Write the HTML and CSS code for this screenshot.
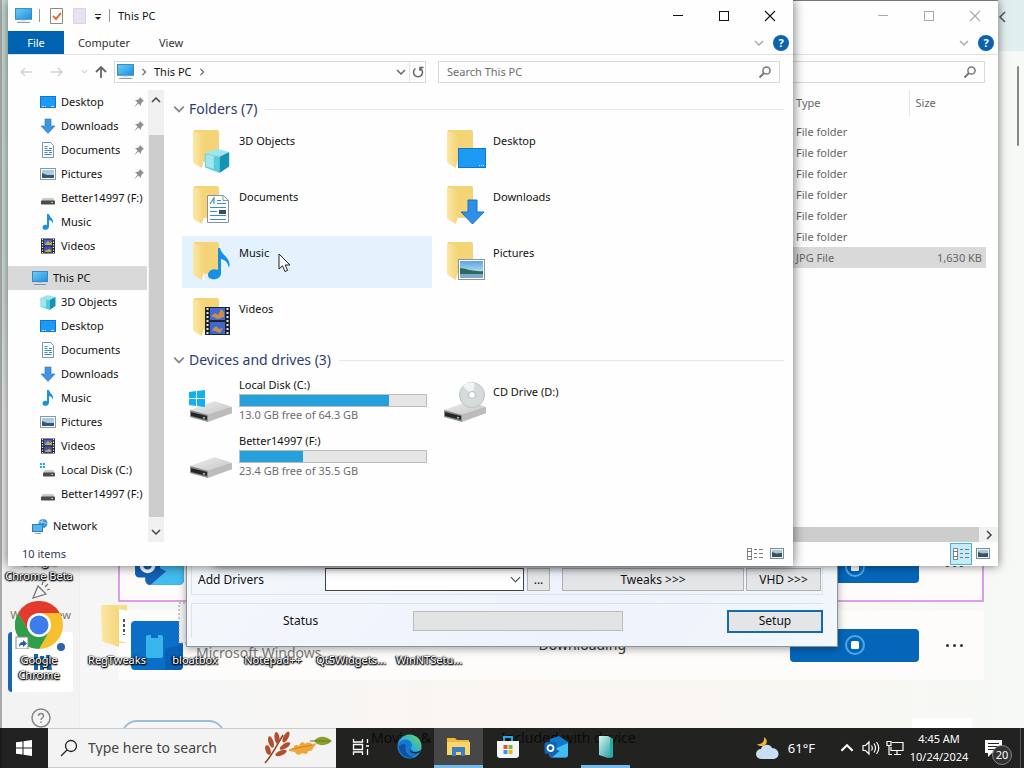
FILE: index.html
```html
<!DOCTYPE html>
<html lang="en">
<head>
  <meta charset="UTF-8">
  <title>This PC</title>
  <link rel="stylesheet" href="styles.css">
</head>

<body>

  <!-- Shared icons -->
  <svg class="sprite" aria-hidden="true">
    <defs>
      <linearGradient id="g-screen" x1="0" y1="0" x2="1" y2="1">
        <stop offset="0" stop-color="#6fd0f7"/><stop offset="1" stop-color="#1c8fe0"/>
      </linearGradient>
      <linearGradient id="g-folder" x1="0" y1="0" x2="1" y2="0">
        <stop offset="0" stop-color="#fbe7a6"/><stop offset="1" stop-color="#f5d57a"/>
      </linearGradient>
      <linearGradient id="g-sky" x1="0" y1="0" x2="0" y2="1">
        <stop offset="0" stop-color="#5aa5df"/><stop offset="1" stop-color="#e8f4fb"/>
      </linearGradient>
      <linearGradient id="g-drive" x1="0" y1="0" x2="1" y2="1">
        <stop offset="0" stop-color="#efefef"/><stop offset="1" stop-color="#c4c4c4"/>
      </linearGradient>
      <linearGradient id="g-edge" x1="0" y1="1" x2="1" y2="0">
        <stop offset="0" stop-color="#0c63c4"/><stop offset=".5" stop-color="#27a9e0"/><stop offset="1" stop-color="#6fe04f"/>
      </linearGradient>
      <linearGradient id="g-note" x1="0" y1="0" x2="1" y2="1">
        <stop offset="0" stop-color="#d7f6f3"/><stop offset="1" stop-color="#179a97"/>
      </linearGradient>
    </defs>

    <symbol id="i-pc" viewBox="0 0 16 16">
      <rect x="0.5" y="1.5" width="15" height="10" fill="url(#g-screen)" stroke="#3c88bd"/>
      <path d="M2 14.500h12" stroke="#7f97a8"/><path d="M6 12.500h4" stroke="#b9cad6"/>
    </symbol>
    <symbol id="i-desktop" viewBox="0 0 16 16">
      <rect x="0.5" y="2.500" width="15" height="11" fill="#1c9bf4" stroke="#1275cc"/>
      <path d="M2 12.500h2M5 12.500h1M11 12.500h3" stroke="#bfe4ff"/>
    </symbol>
    <symbol id="i-down" viewBox="0 0 16 16">
      <path d="M5 1h6v7h4l-7 7.500L1 8h4z" fill="#3f94e0" stroke="#2a74bd" stroke-width=".6"/>
    </symbol>
    <symbol id="i-doc" viewBox="0 0 16 16">
      <path d="M2.500.5h8l3 3v12h-11z" fill="#fdfefe" stroke="#7a97a8"/>
      <path d="M4.500 4.500h3M9 6.500h3M4.500 6.500h3M4.500 8.500h7M4.500 10.500h3M4.500 12.500h7M9 10.500h3" stroke="#3e84b4"/>
    </symbol>
    <symbol id="i-pic" viewBox="0 0 16 16">
      <rect x="0.5" y="2.500" width="15" height="11" fill="#fff" stroke="#8798a5"/>
      <rect x="2" y="4" width="12" height="8" fill="#a5cbe6"/>
      <path d="M2 7l5 2 7 0v3H2z" fill="#3c5668"/>
    </symbol>
    <symbol id="i-drive" viewBox="0 0 16 16">
      <path d="M3 8h10l2 3H1z" fill="#c9c9c9"/><rect x="1" y="10.500" width="14" height="4" rx="1" fill="#4b4b4b"/>
      <rect x="11" y="12" width="2" height="1" fill="#7ee27e"/>
    </symbol>
    <symbol id="i-sysdrive" viewBox="0 0 16 16">
      <path d="M0 1h2v2H0zM3 1h2v2H3zM0 4h2v2H0zM3 4h2v2H3z" fill="#19b0e6"/>
      <path d="M5 8h8l2 3H3z" fill="#c9c9c9"/><rect x="3" y="10.500" width="12" height="4" rx="1" fill="#4b4b4b"/>
      <rect x="11" y="12" width="2" height="1" fill="#7ee27e"/>
    </symbol>
    <symbol id="i-music" viewBox="0 0 16 16">
      <path d="M7 0h2c.5 3.500 5 4.500 4 10-.5-2-1.500-3.500-4-4v6.500C9 16.500 2.500 17 2.500 13.500c0-2.200 2.500-3.200 4.500-2.300z" fill="#1a93d9"/>
    </symbol>
    <symbol id="i-video" viewBox="0 0 16 16">
      <rect x="1" y="0.500" width="14" height="15" fill="#20232c"/>
      <path d="M2.500 1v14M13.500 1v14" stroke="#e8e8e8" stroke-width="1.300" stroke-dasharray="1.300 1.300"/>
      <rect x="4" y="1.500" width="8" height="6" fill="#4b62c2"/><rect x="4" y="8.500" width="8" height="6" fill="#3f55b0"/>
      <path d="M5 6l3-3 2 2 2-1v3H5zM5 13l4-2 2 1v2H5z" fill="#c8a94a"/>
    </symbol>
    <symbol id="i-cube" viewBox="0 0 16 16">
      <path d="M0.500 4L8 1l7.500 2L9.500 6z" fill="#9be6f0"/>
      <path d="M0.500 4l9 2v10l-9-3.500z" fill="#55cddd"/><path d="M15.500 3l-6 3v10l6-4z" fill="#1394b3"/>
      <path d="M1 4.500l5 1v8L1 12z" fill="#c2f1f6" opacity=".7"/>
    </symbol>
    <symbol id="i-network" viewBox="0 0 16 16">
      <circle cx="11" cy="5.500" r="4.500" fill="#3b97d6"/><path d="M7 4c3-1 5 0 8 2M11 1c-2 3-2 6 0 9" stroke="#a6dcf7" fill="none"/>
      <rect x="0.5" y="6.500" width="10" height="7" fill="#52b7f0" stroke="#2b7eb8"/><path d="M3 15.500h6" stroke="#8aa"/>
    </symbol>
    <symbol id="i-pin" viewBox="0 0 12 12">
      <path d="M7 1l4 4-1.500.5L8 8v2L5.500 7.500 1 11.500 4.500 6.500 2 4h2.500L6.500 2.500z" fill="#8f8f8f"/>
    </symbol>
    <symbol id="i-chevron" viewBox="0 0 10 10">
      <path d="M1 3l4 4 4-4" fill="none" stroke="currentColor" stroke-width="1.500"/>
    </symbol>
    <symbol id="i-lens" viewBox="0 0 14 14">
      <circle cx="8.500" cy="5.500" r="3.600" fill="none" stroke="currentColor" stroke-width="1.500"/>
      <path d="M6 8l-4.500 4.500" stroke="currentColor" stroke-width="2"/>
    </symbol>
    <symbol id="i-min" viewBox="0 0 12 12"><path d="M1 5.500h10" stroke="currentColor"/></symbol>
    <symbol id="i-max" viewBox="0 0 12 12"><rect x="1.500" y="1.500" width="9" height="9" fill="none" stroke="currentColor"/></symbol>
    <symbol id="i-close" viewBox="0 0 12 12"><path d="M1 1l10 10M11 1L1 11" stroke="currentColor" stroke-width="1.100"/></symbol>
    <symbol id="i-details" viewBox="0 0 18 14">
      <rect x="1.500" y="1.500" width="4" height="11" fill="#fff" stroke="#888"/>
      <path d="M1 4.500h5M1 9.500h5M8 2.500h3M13 2.500h4M8 6.500h3M13 6.500h4M8 10.500h3M13 10.500h4" stroke="#777"/>
    </symbol>
    <symbol id="i-large" viewBox="0 0 14 12">
      <rect x="0.5" y="0.5" width="13" height="10" fill="#eef4f8" stroke="#7d8b96"/>
      <path d="M2 2h10v7H2z" fill="#a9c6da"/><path d="M2 4l4 1.500L12 5v4H2z" fill="#3a5161"/>
    </symbol>
    <symbol id="i-folder" viewBox="0 0 48 48">
      <path d="M3 4h23c1 0 2 1 2 2v30H12L3 34z" fill="#f5d478"/>
      <path d="M9 35l4 0v7l-4-2z" fill="#fff"/>
      <path d="M2 5l9 3c1 .5 1.500 1 1.500 2v26c0 2-1 2-1.500 6l-7-4c-1-.5-2-1.500-2-3z" fill="url(#g-folder)"/>
    </symbol>
    <symbol id="i-bigdrive" viewBox="0 0 44 24">
      <path d="M1 12L26 3l17 6v5L20 22z" fill="#a9a9a9"/>
      <path d="M1 11L26 2l17 6-24 8z" fill="url(#g-drive)"/>
      <path d="M1 11l18 5v7L1 18z" fill="#8d8d8d"/><path d="M2 13l16 4v4L2 17z" fill="#262626"/>
      <path d="M14 18.500l2 .5" stroke="#7ee27e" stroke-width="1.500"/>
      <path d="M19 16l24-8v6l-24 9z" fill="#bcbcbc"/>
    </symbol>
    <symbol id="i-stop" viewBox="0 0 22 22">
      <circle cx="11" cy="11" r="9" fill="none" stroke="#4fa7ea" stroke-width="2"/>
      <rect x="7" y="7" width="8" height="8" rx="1.500" fill="#fff"/>
    </symbol>
    <symbol id="i-outlook" viewBox="0 0 50 44">
      <path d="M12 6L30 0l18 12v26c0 3-2 5-5 5H16c-3 0-5-2-5-5z" fill="#1277cf"/>
      <path d="M11 30l37-16v24c0 3-2 5-5 5H16c-3 0-5-2-5-5z" fill="#42bdf0"/>
      <path d="M11 20l20 10-15 13c-3 0-5-2-5-5z" fill="#1e5fb5"/>
      <rect x="1" y="12" width="24" height="24" rx="4" fill="#0f62b4"/>
      <circle cx="13" cy="24" r="6" fill="none" stroke="#fff" stroke-width="3.500"/>
    </symbol>
  </svg>

  <!-- Store app, fills the screen at the back -->
  <section class="store">
    <nav class="store-nav">
      <a href="#new" class="store-link">
        <svg width="20" height="18" viewBox="0 0 20 18"><path d="M2 17L7 5l8 8zM11 4l1-3M14 6l3-3M16 9l3-1" fill="none" stroke="#777" stroke-width="1.300"/></svg>
        <span>What's New</span>
      </a>
      <a href="#library" class="store-link current">
        <svg width="20" height="20" viewBox="0 0 20 20"><path d="M1 2h4v16H1zM7 4h4v14H7zM13 3h4l2 15h-5z" fill="#1767b0"/></svg>
        <i class="dot"></i>
      </a>
      <a href="#help" class="store-link help">
        <svg width="20" height="20" viewBox="0 0 20 20"><circle cx="10" cy="10" r="9" fill="none" stroke="#888" stroke-width="1.500"/><path d="M7.500 8c0-3.500 5-3.500 5 0 0 2-2.500 2-2.500 4M10 13.500v1.500" fill="none" stroke="#888" stroke-width="1.500"/></svg>
      </a>
    </nav>
    <div class="store-list">
      <article class="app-card picked">
        <svg class="app-icon" width="52" height="46"><use href="#i-outlook"/></svg>
        <button class="stop" aria-label="Stop"><svg width="22" height="22"><use href="#i-stop"/></svg></button>
        <button class="more" aria-label="More"><i></i><i></i><i></i></button>
      </article>
      <article class="app-card">
        <svg class="app-icon" width="52" height="49" viewBox="0 0 52 49"><rect width="52" height="49" rx="4" fill="#0b6fc8"/><rect x="15" y="14" width="17" height="23" rx="2" fill="#37b5ec"/><path d="M20 14h7v3h-7z" fill="#0b6fc8"/><path d="M34 28l18-5v21c0 3-1 5-4 5H34z" fill="#0860b4"/></svg>
        <span class="publisher">Microsoft Windows</span>
        <span class="state">Downloading</span>
        <button class="stop" aria-label="Stop"><svg width="22" height="22"><use href="#i-stop"/></svg></button>
        <button class="more" aria-label="More"><i></i><i></i><i></i></button>
      </article>
      <div class="app-row">
        <button class="pill" aria-label="Filter"></button>
        <span class="row-name">Movies &amp; TV</span>
        <span class="row-note">Included with device</span>
        <span class="row-box"></span>
      </div>
    </div>
    <svg class="store-arrow" width="8" height="12" viewBox="0 0 8 12"><path d="M7 1L2 6l5 5" fill="none" stroke="#555" stroke-width="1.500"/></svg>
    <span class="store-scroll"></span>
  </section>

  <!-- Desktop shortcuts -->
  <div class="shortcuts">
    <div class="shortcut">
      <span>Google<br>Chrome Beta</span>
      <div class="shortcut-pic">
        <svg width="48" height="48" viewBox="0 0 48 48">
          <circle cx="24" cy="24" r="24" fill="#f9c02d"/>
          <path d="M3.200 12A24 24 0 0 1 44.800 12H24z" fill="#e23b2e"/>
          <path d="M3.200 12A24 24 0 0 0 24 48L34.400 30 24 24 13.600 30z" fill="#2f9e4b"/>
          <path d="M3.200 12L13.600 30 24 12z" fill="#e23b2e"/>
          <circle cx="24" cy="24" r="12" fill="#fff"/><circle cx="24" cy="24" r="9.500" fill="#3b7ded"/>
          <rect x="1" y="36" width="12" height="12" fill="#fff" stroke="#888"/>
          <path d="M4 46c0-4 2-5 4-5v-2l4 3.500L8 46v-2c-2 0-3 0-4 2z" fill="#1f5fae"/>
        </svg>
      </div>
      <span>Google<br>Chrome</span>
    </div>
    <div class="shortcut">
      <div class="shortcut-pic">
        <svg width="48" height="48" viewBox="0 0 48 48"><path d="M8 4h26v38H12z" fill="#f7dc8a"/><path d="M26 8l9 2v32l-9-2z" fill="#fff"/><path d="M31 18v16" stroke="#456" stroke-width="2" stroke-dasharray="3 2"/><path d="M8 4h4l14 4v38L9 40z" fill="url(#g-folder)"/></svg>
      </div>
      <span>RegTweaks</span>
    </div>
    <div class="shortcut">
      <div class="shortcut-pic">
        <svg width="48" height="48" viewBox="0 0 48 48"><rect x="8" y="2" width="32" height="40" fill="#f4f4f4" stroke="#999" stroke-dasharray="2 2"/></svg>
      </div>
      <span>bloatbox</span>
    </div>
    <div class="shortcut"><span>Notepad++</span></div>
    <div class="shortcut"><span>Qt5Widgets...</span></div>
    <div class="shortcut"><span>WinNTSetu...</span></div>
  </div>

  <!-- WinNTSetup -->
  <section class="setup">
    <div class="setup-row drivers">
      <label for="drivers">Add Drivers</label>
      <select id="drivers"><option></option></select>
      <button class="btn browse">...</button>
      <button class="btn tweaks">Tweaks &gt;&gt;&gt;</button>
      <button class="btn vhd">VHD &gt;&gt;&gt;</button>
    </div>
    <div class="setup-row status">
      <span class="status-label">Status</span>
      <div class="setup-progress" role="progressbar" aria-label="Status"></div>
      <button class="btn run">Setup</button>
    </div>
  </section>

  <!-- Explorer, inactive window -->
  <section class="window back">
    <header class="titlebar">
      <div class="caption">
        <button aria-label="Minimize"><svg width="12" height="12"><use href="#i-min"/></svg></button>
        <button aria-label="Maximize"><svg width="12" height="12"><use href="#i-max"/></svg></button>
        <button aria-label="Close"><svg width="12" height="12"><use href="#i-close"/></svg></button>
      </div>
    </header>
    <div class="ribbon">
      <svg class="expand" width="10" height="10"><use href="#i-chevron"/></svg>
      <button class="help-btn" aria-label="Help">?</button>
    </div>
    <div class="address-row">
      <div class="search-box">
        <input type="search" aria-label="Search folder">
        <svg width="14" height="14"><use href="#i-lens"/></svg>
      </div>
    </div>
    <div class="details">
      <table>
        <thead><tr><th>Type</th><th>Size</th></tr></thead>
        <tbody>
          <tr><td>File folder</td><td></td></tr>
          <tr><td>File folder</td><td></td></tr>
          <tr><td>File folder</td><td></td></tr>
          <tr><td>File folder</td><td></td></tr>
          <tr><td>File folder</td><td></td></tr>
          <tr><td>File folder</td><td></td></tr>
          <tr class="selected"><td>JPG File</td><td>1,630 KB</td></tr>
        </tbody>
      </table>
    </div>
    <div class="hscroll"><span class="hthumb"></span><svg class="right" width="10" height="10"><use href="#i-chevron"/></svg></div>
    <footer class="statusbar">
      <button class="view on" aria-label="Details"><svg width="18" height="14"><use href="#i-details"/></svg></button>
      <button class="view" aria-label="Large icons"><svg width="14" height="12"><use href="#i-large"/></svg></button>
    </footer>
  </section>

  <!-- Explorer, This PC -->
  <main class="window front">
    <header class="titlebar">
      <svg class="tb-pc" width="17" height="17"><use href="#i-pc"/></svg>
      <span class="tb-sep"></span>
      <svg class="tb-check" width="13" height="16" viewBox="0 0 13 16"><path d="M.5.500h12v15H.5z" fill="#fff" stroke="#8a8a8a"/><path d="M3 8l3 3 5-6" fill="none" stroke="#e0703a" stroke-width="2"/></svg>
      <svg class="tb-new" width="13" height="16" viewBox="0 0 13 16"><path d="M.5.500h12v15H.5z" fill="#e9e2ee" stroke="#ddd5e2"/></svg>
      <svg class="tb-drop" width="8" height="8" viewBox="0 0 8 8"><path d="M1 1.500h6" stroke="#222"/><path d="M1 4h6L4 7z" fill="#222"/></svg>
      <span class="tb-sep"></span>
      <h1>This PC</h1>
      <div class="caption">
        <button aria-label="Minimize"><svg width="12" height="12"><use href="#i-min"/></svg></button>
        <button aria-label="Maximize"><svg width="12" height="12"><use href="#i-max"/></svg></button>
        <button aria-label="Close"><svg width="12" height="12"><use href="#i-close"/></svg></button>
      </div>
    </header>

    <div class="ribbon">
      <button class="tab file">File</button>
      <button class="tab">Computer</button>
      <button class="tab view-tab">View</button>
      <svg class="expand" width="10" height="10"><use href="#i-chevron"/></svg>
      <button class="help-btn" aria-label="Help">?</button>
    </div>

    <div class="address-row">
      <div class="nav-arrows">
        <button aria-label="Back" disabled><svg width="14" height="12" viewBox="0 0 14 12"><path d="M13 6H2M6 2L2 6l4 4" fill="none" stroke="currentColor" stroke-width="1.300"/></svg></button>
        <button aria-label="Forward" disabled><svg width="14" height="12" viewBox="0 0 14 12"><path d="M1 6h11M8 2l4 4-4 4" fill="none" stroke="currentColor" stroke-width="1.300"/></svg></button>
        <button class="recent" aria-label="Recent locations" disabled><svg width="7" height="7"><use href="#i-chevron"/></svg></button>
        <button class="up" aria-label="Up"><svg width="12" height="14" viewBox="0 0 12 14"><path d="M6 13V2M1 7l5-5 5 5" fill="none" stroke="currentColor" stroke-width="1.800"/></svg></button>
      </div>
      <div class="address">
        <svg width="17" height="17"><use href="#i-pc"/></svg>
        <svg class="right" width="8" height="8"><use href="#i-chevron"/></svg>
        <a href="#pc">This PC</a>
        <svg class="right" width="8" height="8"><use href="#i-chevron"/></svg>
        <button class="history" aria-label="Previous locations"><svg width="10" height="10"><use href="#i-chevron"/></svg></button>
        <button class="refresh" aria-label="Refresh"><svg width="12" height="12" viewBox="0 0 12 12"><path d="M3.500 2.500a4.500 4.500 0 1 0 5 0M8 5V1.500h3.500" fill="none" stroke="currentColor" stroke-width="1.500"/></svg></button>
      </div>
      <div class="search-box">
        <input type="search" placeholder="Search This PC" aria-label="Search This PC">
        <svg width="14" height="14"><use href="#i-lens"/></svg>
      </div>
    </div>

    <div class="window-body">
      <nav class="tree">
        <a href="#q"><svg class="ic"><use href="#i-desktop"/></svg>Desktop<svg class="pin"><use href="#i-pin"/></svg></a>
        <a href="#q"><svg class="ic"><use href="#i-down"/></svg>Downloads<svg class="pin"><use href="#i-pin"/></svg></a>
        <a href="#q"><svg class="ic"><use href="#i-doc"/></svg>Documents<svg class="pin"><use href="#i-pin"/></svg></a>
        <a href="#q"><svg class="ic"><use href="#i-pic"/></svg>Pictures<svg class="pin"><use href="#i-pin"/></svg></a>
        <a href="#q"><svg class="ic"><use href="#i-drive"/></svg>Better14997 (F:)</a>
        <a href="#q"><svg class="ic"><use href="#i-music"/></svg>Music</a>
        <a href="#q"><svg class="ic"><use href="#i-video"/></svg>Videos</a>
        <a href="#pc" class="top selected"><svg class="ic"><use href="#i-pc"/></svg>This PC</a>
        <a href="#pc"><svg class="ic"><use href="#i-cube"/></svg>3D Objects</a>
        <a href="#pc"><svg class="ic"><use href="#i-desktop"/></svg>Desktop</a>
        <a href="#pc"><svg class="ic"><use href="#i-doc"/></svg>Documents</a>
        <a href="#pc"><svg class="ic"><use href="#i-down"/></svg>Downloads</a>
        <a href="#pc"><svg class="ic"><use href="#i-music"/></svg>Music</a>
        <a href="#pc"><svg class="ic"><use href="#i-pic"/></svg>Pictures</a>
        <a href="#pc"><svg class="ic"><use href="#i-video"/></svg>Videos</a>
        <a href="#pc"><svg class="ic"><use href="#i-sysdrive"/></svg>Local Disk (C:)</a>
        <a href="#pc"><svg class="ic"><use href="#i-drive"/></svg>Better14997 (F:)</a>
        <a href="#net" class="top"><svg class="ic"><use href="#i-network"/></svg>Network</a>
      </nav>
      <div class="vscroll">
        <svg class="flip" width="10" height="10"><use href="#i-chevron"/></svg>
        <span class="vthumb"></span>
        <svg width="10" height="10"><use href="#i-chevron"/></svg>
      </div>

      <div class="content">
        <h2><svg width="12" height="12"><use href="#i-chevron"/></svg>Folders (7)</h2>
        <div class="tiles">
          <a href="#f" class="tile">
            <svg class="pic" viewBox="0 0 48 48"><use href="#i-folder" width="48" height="48"/><use href="#i-cube" x="13" y="21" width="26" height="26"/></svg>
            <span>3D Objects</span>
          </a>
          <a href="#f" class="tile">
            <svg class="pic" viewBox="0 0 48 48"><use href="#i-folder" width="48" height="48"/><rect x="13.500" y="22.500" width="27" height="19" fill="#1c9bf4" stroke="#1275cc"/><path d="M34 39.500h5" stroke="#bfe4ff" stroke-dasharray="1 1"/></svg>
            <span>Desktop</span>
          </a>
          <a href="#f" class="tile">
            <svg class="pic" viewBox="0 0 48 48"><use href="#i-folder" width="48" height="48"/><path d="M16.500 13.500h16l5 5v22h-21z" fill="#fff" stroke="#8795a0"/><path d="M32 13.500v5h5.500" fill="none" stroke="#8795a0"/><path d="M19 22l4-6v6M26 18.500h4M26 21.500h9M19 25.500h16M19 29.500h7M19 33.500h16M19 37.500h16" fill="none" stroke="#3b8ec0" stroke-width="1.200"/><rect x="28" y="28" width="7" height="4" fill="#334f66"/></svg>
            <span>Documents</span>
          </a>
          <a href="#f" class="tile">
            <svg class="pic" viewBox="0 0 48 48"><use href="#i-folder" width="48" height="48"/><path d="M23 18h9v12h7L27.500 42 16 30h7z" fill="#2c8fe8" stroke="#2071bd"/></svg>
            <span>Downloads</span>
          </a>
          <a href="#f" class="tile hover">
            <svg class="pic" viewBox="0 0 48 48"><use href="#i-folder" width="48" height="48"/><path d="M27 10h2c1 7 12 10 9 20-1-5-3-8-8-9v15c-1 7-14 7-13 0 1-4 6-6 10-4z" fill="#168fe6"/></svg>
            <span>Music</span>
          </a>
          <a href="#f" class="tile">
            <svg class="pic" viewBox="0 0 48 48"><use href="#i-folder" width="48" height="48"/><rect x="13.500" y="21.500" width="26" height="20" fill="#fff" stroke="#8795a0"/><rect x="15" y="23" width="23" height="17" fill="url(#g-sky)"/><path d="M15 30c8 1 14 4 23 3v3H15z" fill="#2e6a58"/><path d="M15 36h23v4H15z" fill="#7fa9cc"/></svg>
            <span>Pictures</span>
          </a>
          <a href="#f" class="tile">
            <svg class="pic" viewBox="0 0 48 48"><use href="#i-folder" width="48" height="48"/><rect x="14" y="13" width="25" height="28" fill="#20232c"/><path d="M16.500 14v27M36.500 14v27" stroke="#e8e8e8" stroke-width="2" stroke-dasharray="2 2"/><rect x="19" y="14" width="15" height="12" fill="#4469d0"/><rect x="19" y="28" width="15" height="12" fill="#3f68cf"/><path d="M20 22l4-3 3 2 3-6 3 3v5l-6 2zM21 36l4-4 3 3 4-1-3 5z" fill="#c98d4e"/></svg>
            <span>Videos</span>
          </a>
        </div>

        <h2 class="drives-title"><svg width="12" height="12"><use href="#i-chevron"/></svg>Devices and drives (3)</h2>
        <div class="tiles">
          <a href="#d" class="tile drive">
            <svg class="pic" viewBox="0 0 48 48"><use href="#i-bigdrive" x="0" y="22" width="44" height="24"/><path d="M0 15l7-1v7H0zM8 14l8-1v8H8zM0 22h7v7l-7-1zM8 22h8v8l-8-1z" fill="#12b0ee"/></svg>
            <div class="drive-info">
              <span>Local Disk (C:)</span>
              <div class="bar"><div class="used" style="width: 80%"></div></div>
              <small>13.0 GB free of 64.3 GB</small>
            </div>
          </a>
          <a href="#d" class="tile drive">
            <svg class="pic" viewBox="0 0 48 48"><use href="#i-bigdrive" x="0" y="22" width="44" height="24"/><circle cx="29" cy="18" r="12.500" fill="#d5dbdb" stroke="#bcc3c3"/><path d="M29 18L20 9a13 13 0 0 1 12-3z" fill="#f3f5f5"/><circle cx="29" cy="18" r="3.500" fill="#fff" stroke="#b5bcbc"/></svg>
            <span class="cd-name">CD Drive (D:)</span>
          </a>
          <a href="#d" class="tile drive">
            <svg class="pic" viewBox="0 0 48 48"><use href="#i-bigdrive" x="0" y="22" width="44" height="24"/></svg>
            <div class="drive-info">
              <span>Better14997 (F:)</span>
              <div class="bar"><div class="used" style="width: 34%"></div></div>
              <small>23.4 GB free of 35.5 GB</small>
            </div>
          </a>
        </div>
      </div>
    </div>

    <footer class="statusbar">
      <span>10 items</span>
      <button class="view" aria-label="Details"><svg width="18" height="14"><use href="#i-details"/></svg></button>
      <button class="view" aria-label="Large icons"><svg width="14" height="12"><use href="#i-large"/></svg></button>
    </footer>
  </main>

  <svg class="cursor" width="13" height="20" viewBox="0 0 13 20"><path d="M1 1v15l3.500-3.200L7 18.500l2.600-1.100L7.200 12H12z" fill="#fff" stroke="#222"/></svg>

  <!-- Taskbar -->
  <footer class="taskbar">
    <button class="start" aria-label="Start"><svg width="16" height="16" viewBox="0 0 16 16"><path d="M0 2.300l6.500-.9v6.100H0zM7.500 1.200L16 0v7.500H7.500zM0 8.500h6.500v6.100L0 13.700zM7.500 8.500H16V16l-8.500-1.200z" fill="#fff"/></svg></button>
    <div class="task-search">
      <svg width="18" height="18" viewBox="0 0 18 18"><circle cx="11" cy="7" r="5.500" fill="none" stroke="#222" stroke-width="1.300"/><path d="M7 11l-6 6" stroke="#222" stroke-width="1.300"/></svg>
      <input type="text" placeholder="Type here to search" aria-label="Type here to search">
      <svg width="72" height="34" viewBox="0 0 72 34">
        <path d="M3 32C9 26 14 16 21 4" fill="none" stroke="#8e3f24" stroke-width="1.500"/>
        <g fill="#b54e2e">
          <ellipse cx="9" cy="11" rx="2.500" ry="6" transform="rotate(-18 9 11)"/><ellipse cx="15" cy="7" rx="2.500" ry="6" transform="rotate(-8 15 7)"/>
          <ellipse cx="24" cy="6" rx="2.500" ry="6" transform="rotate(28 24 6)"/><ellipse cx="23" cy="15" rx="2.500" ry="6" transform="rotate(58 23 15)"/>
          <ellipse cx="19" cy="22" rx="2.500" ry="6" transform="rotate(68 19 22)"/><ellipse cx="6" cy="19" rx="2.500" ry="5" transform="rotate(-18 6 19)"/>
        </g>
        <path d="M27 18l5-1c0-4 3-3 5-2 1-4 4-5 6-2 3-3 6-1 7 0l5-1-4 5c0 3-3 3-5 3 0 4-4 3-6 2-2 3-6 2-7-1l-6-1z" fill="#f0a63a"/>
        <path d="M30 18l20-4" stroke="#c9781f" stroke-width=".8"/>
        <path d="M52 10c5-6 12-5 18 0-5 5-13 6-18 0z" fill="#8ba02c"/><path d="M48 10h20" stroke="#64781c"/>
      </svg>
    </div>
    <div class="apps">
      <button aria-label="Task View"><svg width="18" height="18" viewBox="0 0 18 18"><path d="M1.500 1v3h9V1M1.500 17v-3h9v3M1.500 6.500h9v5h-9zM15.500 1v4M15.500 11v6M14 8h3" fill="none" stroke="#fff" stroke-width="1.300"/></svg></button>
      <button aria-label="Edge"><svg width="25" height="25" viewBox="0 0 25 25"><circle cx="12.500" cy="12.500" r="12" fill="url(#g-edge)"/><path d="M1 11c3-7 13-7 14 0 0 2-2 2-1 4 2 4 8 3 10 1-3 7-13 10-19 4-3-3-4-6-4-9z" fill="#1577cf"/><path d="M9 11c-2 5 1 12 9 12-8 3-16-3-16-10 1-3 5-4 7-2z" fill="#0d52a3"/><path d="M13 15c1 4 7 4 11 1l-1 2c-5 3-11 1-10-3z" fill="#222"/></svg></button>
      <button class="active" aria-label="File Explorer"><svg width="23" height="19" viewBox="0 0 23 19"><path d="M0 1h8l2 2h12v15H0z" fill="#f0b73a"/><path d="M0 5h23v13H0z" fill="#fbd66b"/><path d="M5 10h13v9h-4v-4H9v4H5z" fill="#3d7fc4"/></svg></button>
      <button aria-label="Store"><svg width="24" height="24" viewBox="0 0 24 24"><path d="M8 6V2h8v4" fill="none" stroke="#2aa5e8" stroke-width="2"/><path d="M1 6h22v14c0 2-1 3-3 3H4c-2 0-3-1-3-3z" fill="#f5f5f5"/><path d="M7.500 10h4v4h-4z" fill="#e8512f"/><path d="M12.500 10h4v4h-4z" fill="#7cba2f"/><path d="M7.500 15h4v4h-4z" fill="#2a9fe3"/><path d="M12.500 15h4v4h-4z" fill="#f6b51e"/></svg></button>
      <button aria-label="Outlook"><svg width="25" height="22"><use href="#i-outlook"/></svg></button>
      <button class="running" aria-label="Setup tool"><svg width="16" height="24" viewBox="0 0 16 24"><path d="M1 1l9 0 5 3v18l-5 1L1 20z" fill="url(#g-note)"/><path d="M12 2l3 2v18l-3 1z" fill="#2aa9a5"/></svg></button>
    </div>
    <div class="tray">
      <button class="weather"><svg width="25" height="24" viewBox="0 0 25 24"><path d="M9 1c5 3 3 10-4 9-1 0-2-1-3-2 5 1 8-3 7-7z" fill="#f6b52c"/><path d="M6 23a5 5 0 0 1 0-10c1-5 9-6 11-1 8 0 9 11 1 11z" fill="#c9ddf7"/></svg>61°F</button>
      <button aria-label="Hidden icons"><svg class="flip" width="14" height="14"><use href="#i-chevron"/></svg></button>
      <button aria-label="Volume"><svg width="18" height="16" viewBox="0 0 18 16"><path d="M1 5.500h2.500L7 2v12l-3.500-3.500H1zM9.500 5.500c1 1.500 1 3.500 0 5M12 3.500c2 3 2 6 0 9M14.500 2c3 4 3 8 0 12" fill="none" stroke="#fff" stroke-width="1.200"/></svg></button>
      <button aria-label="Network"><svg width="18" height="16" viewBox="0 0 18 16"><path d="M6 2.500h11v8H5V7M8 14.500h7M11 11v3M1 1.500h4v4H1zM3 6v8.500h3" fill="none" stroke="#fff" stroke-width="1.200"/></svg></button>
      <button class="clock"><span>4:45 AM</span><span>10/24/2024</span></button>
      <button class="notices" aria-label="Notifications"><svg width="17" height="17" viewBox="0 0 17 17"><path d="M0 0h17v13H7l-4 4v-4H0z" fill="#fff"/><path d="M3 3.500h11M3 6.500h11M3 9.500h7" stroke="#222"/></svg><span class="badge">20</span></button>
    </div>
  </footer>

</body>
</html>
```

FILE: styles.css
```css
/* Reset */
* {
  margin: 0;
  padding: 0;
  box-sizing: border-box;
}

body {
  position: relative;
  height: 100vh;
  overflow: hidden;
  font-family: "Noto Sans", "Open Sans", sans-serif;
  font-size: 11px;
  line-height: 16px;
  color: #111;
}

button,
input,
select {
  font: inherit;
  color: inherit;
  background: none;
  border: none;
}

a {
  color: inherit;
  text-decoration: none;
}

svg {
  flex: none;
}

.sprite {
  position: absolute;
  width: 0;
  height: 0;
}

.flip {
  transform: rotate(180deg);
}

.right {
  transform: rotate(-90deg);
}

/* Store */
.store {
  position: absolute;
  inset: 0;
  display: flex;
  background: linear-gradient(#e0efee 50px, rgba(246, 248, 246, 0) 52px), linear-gradient(90deg, #f6f6f6 20%, #fbf6f1 50%, #f9f8f3 85%, #f6f9f6);
  border-left: 2px solid #a9aaaa;
}

.store-nav {
  display: flex;
  flex-direction: column;
  justify-content: flex-end;
  width: 78px;
  border-right: 1px solid #eee;
  background: linear-gradient(#cfe3dd, #d8e8e0 300px, #f3f3f3 420px);
}

.store-link {
  position: relative;
  display: flex;
  flex-direction: column;
  align-items: center;
  justify-content: center;
  gap: 8px;
  height: 60px;
  margin: 0 6px;
  color: #777;
  white-space: nowrap;
}

.store-link.current {
  background: #fff;
  border-left: 4px solid #1767b0;
  border-radius: 4px;
}

.dot {
  position: absolute;
  top: 11px;
  right: 8px;
  width: 8px;
  height: 8px;
  border-radius: 50%;
  background: #2f62a5;
}

.store-link.help {
  justify-content: flex-start;
  height: 76px;
  padding-top: 16px;
}

.store-list {
  flex: 1;
  display: flex;
  flex-direction: column;
  justify-content: flex-end;
  gap: 8px;
  padding: 0 40px 0 38px;
}

.app-card {
  display: flex;
  align-items: center;
  height: 70px;
  padding: 0 15px 0 13px;
  background: #fefcfb;
  border-radius: 4px;
}

.app-card.picked {
  align-items: flex-start;
  border: 2px solid #dc9ee6;
  border-radius: 0;
  padding: 6px 13px 0 14px;
}

.publisher {
  margin: 16px 0 0 13px;
  font-size: 14px;
  color: #7c7c7c;
}

.state {
  margin-left: auto;
  padding-right: 164px;
  font-size: 14px;
  color: #333;
}

.stop {
  display: flex;
  align-items: center;
  justify-content: center;
  width: 129px;
  height: 33px;
  border-radius: 4px;
  background: #0566b8;
}

.picked .stop {
  margin: 10px 0 0 auto;
}

.more {
  display: flex;
  justify-content: center;
  gap: 4px;
  width: 30px;
  margin-left: 20px;
}

.picked .more {
  margin-top: 24px;
}

.more i {
  width: 3px;
  height: 3px;
  border-radius: 50%;
  background: #333;
}

.app-row {
  display: flex;
  align-items: flex-start;
  height: 48px;
  margin-top: 32px;
  font-size: 14px;
  line-height: 36px;
  color: #000;
}

.pill {
  width: 104px;
  height: 40px;
  margin-left: 3px;
  border: 2px solid #9dbdd6;
  border-radius: 16px;
}

.row-name {
  width: 130px;
  margin-left: 146px;
}

.row-box {
  width: 60px;
  height: 30px;
  margin: -2px 12px 0 auto;
  background: #fff;
}

.store-arrow {
  position: absolute;
  top: 11px;
  right: 18px;
}

.store-scroll {
  position: absolute;
  top: 66px;
  right: 5px;
  width: 2px;
  height: 80px;
  border-radius: 2px;
  background: #888;
}

/* Desktop shortcuts */
.shortcuts {
  position: absolute;
  left: 0;
  bottom: 86px;
  display: flex;
  align-items: flex-start;
}

.shortcut {
  align-self: flex-end;
  display: flex;
  flex-direction: column;
  align-items: center;
  width: 78px;
  padding-bottom: 15px;
  line-height: 15px;
  text-align: center;
  color: #fff;
  text-shadow: 0 0 2px #000, 1px 1px 1px #000, 0 1px 2px #000, -1px 0 1px #000;
}

.shortcut:first-child {
  padding-bottom: 0;
}

.shortcut-pic {
  height: 48px;
  margin: 18px 0 3px;
}

/* Setup window */
.setup {
  position: absolute;
  left: 186px;
  right: 186px;
  bottom: 121px;
  padding: 8px 14px 8px 4px;
  border: 1px solid #8b939c;
  background: linear-gradient(135deg, #f5f8fb, #edf2fd 60%, #f2f7fa);
  box-shadow: 0 2px 8px rgba(0, 0, 0, .35);
}

.setup-row {
  display: flex;
  align-items: center;
  border: 1px solid #dde3ea;
}

.drivers {
  position: relative;
  align-items: flex-end;
  height: 36px;
  padding: 0 1px 3px 6px;
  border-top: none;
  margin-bottom: 8px;
}

.drivers label {
  width: 127px;
  font-size: 12px;
  line-height: 22px;
}

.drivers select {
  appearance: none;
  width: 199px;
  height: 23px;
  margin-right: 3px;
  border: 1px solid #444;
  background: #fff;
}

/* arrow of the drop-down */
.drivers::after {
  content: "";
  position: absolute;
  left: 320px;
  bottom: 13px;
  width: 6px;
  height: 6px;
  border: solid #444;
  border-width: 0 1px 1px 0;
  transform: rotate(45deg);
}

.btn {
  height: 23px;
  border: 1px solid #adb2b5;
  background: #e3e5e6;
  font-size: 12px;
  white-space: nowrap;
}

.browse {
  width: 23px;
  margin-right: 12px;
}

.tweaks {
  flex: 1;
  margin-right: 2px;
}

.vhd {
  width: 75px;
}

.status {
  height: 35px;
  border-right: none;
  border-bottom: none;
}

.status-label {
  width: 221px;
  padding-left: 91px;
  font-size: 12px;
}

.setup-progress {
  width: 210px;
  height: 20px;
  border: 1px solid #b9bdbf;
  background: #e2e4e4;
}

.run {
  width: 96px;
  margin-left: auto;
  border: 2px solid #1668a7;
}

/* Explorer windows */
.window {
  position: absolute;
  top: 0;
  bottom: 202px;
  display: flex;
  flex-direction: column;
  background: #fefefe;
}

.back {
  left: 214px;
  right: 26px;
  color: #666;
  border-top: 1px solid #777;
  box-shadow: 0 0 9px rgba(0, 0, 0, .55);
}

.front {
  left: 8px;
  right: 231px;
  box-shadow: 0 0 11px rgba(0, 0, 0, .6);
}

.titlebar {
  display: flex;
  align-items: center;
  height: 31px;
  padding-left: 7px;
}

.back .titlebar {
  height: 30px;
}

.titlebar h1 {
  margin-left: 8px;
  font-size: 11px;
  font-weight: 400;
}

.tb-sep {
  width: 1px;
  height: 13px;
  margin-left: 7px;
  background: #999;
}

.tb-check {
  margin-left: 10px;
}

.tb-new {
  margin-left: 10px;
}

.tb-drop {
  margin: 2px 0 0 8px;
}

.caption {
  display: flex;
  margin-left: auto;
}

.caption button {
  display: flex;
  align-items: center;
  justify-content: center;
  width: 46px;
  height: 30px;
}

.back .caption {
  color: #aaa;
}

.ribbon {
  display: flex;
  align-items: center;
  height: 24px;
  padding-right: 4px;
  border-bottom: 1px solid #dfe1e3;
  color: #333;
}

.tab {
  width: 80px;
  height: 23px;
}

.tab.file {
  width: 56px;
  background: #0063b1;
  color: #fff;
}

.tab.view-tab {
  width: 54px;
}

.expand {
  margin-left: auto;
  color: #aaa;
}

.help-btn {
  width: 16px;
  height: 16px;
  margin-left: 9px;
  border-radius: 50%;
  background: #0b62b0;
  color: #fff;
  font-weight: 700;
}

.address-row {
  display: flex;
  align-items: center;
  height: 35px;
  padding: 0 13px 2px 11px;
}

.nav-arrows {
  display: flex;
  align-items: center;
  width: 95px;
  color: #666;
}

.nav-arrows button {
  display: flex;
  width: 31px;
}

.nav-arrows button:disabled {
  color: #d0d0d0;
}

.nav-arrows .recent {
  width: 14px;
}

.nav-arrows .up {
  width: 15px;
}

.address,
.search-box {
  display: flex;
  align-items: center;
  height: 22px;
  border: 1px solid #d9d9d9;
}

.address {
  flex: 1;
  gap: 6px;
  margin-right: 12px;
  padding-left: 2px;
  color: #666;
}

.address a {
  color: #111;
}

.address button {
  display: flex;
  align-items: center;
  justify-content: center;
  height: 20px;
}

.address .history {
  width: 16px;
  margin: 0 -6px 0 auto;
}

.address .refresh {
  width: 16px;
  border-left: 1px solid #e2e2e2;
}

.search-box {
  width: 342px;
  padding: 0 7px 0 8px;
  color: #777;
}

.search-box input {
  flex: 1;
  outline: none;
}

.search-box input::placeholder {
  color: #6d6d6d;
}

.back .search-box {
  margin-left: auto;
}

.window-body {
  flex: 1;
  display: flex;
  min-height: 0;
}

.tree {
  width: 139px;
}

.tree a {
  display: flex;
  align-items: center;
  gap: 5px;
  height: 24px;
  padding-left: 32px;
  white-space: nowrap;
}

.tree a.top {
  margin-top: 8px;
  padding-left: 24px;
}

.tree a.selected {
  background: #d9d9d9;
}

.tree .ic {
  width: 16px;
  height: 16px;
}

.tree .pin {
  width: 12px;
  height: 12px;
  margin: 0 2px 0 auto;
}

.vscroll {
  display: flex;
  flex-direction: column;
  align-items: center;
  width: 16px;
  margin: 0 9px 0 1px;
  padding: 5px 0;
  background: #f0f0f0;
  color: #444;
}

.vthumb {
  flex: 1;
  width: 15px;
  margin: 30px 0 10px;
  background: #cdcdcd;
}

.content {
  flex: 1;
  padding: 9px 9px 0 0;
}

.content h2 {
  display: flex;
  align-items: center;
  height: 20px;
  font-size: 14px;
  font-weight: 400;
  color: #2d3c6e;
}

.content h2 svg {
  margin-right: 4px;
  color: #888;
}

.content h2::after {
  content: "";
  flex: 1;
  height: 1px;
  margin-left: 8px;
  background: #e6e6e6;
}

.tiles {
  display: grid;
  grid-template-columns: 250px 250px;
  gap: 4px;
  margin: 5px 0 0 9px;
}

.tile {
  display: flex;
  height: 52px;
  padding: 9px 5px 0 9px;
}

.tile.hover {
  background: #e3f2fc;
}

.tile .pic {
  width: 48px;
  height: 48px;
  margin-top: -7px;
}

.content .drives-title {
  margin-top: 6px;
}

.tile.drive {
  padding: 0 5px 0 7px;
}

.tile.drive .pic {
  margin: 0 2px 0 0;
}

.drives-title + .tiles {
  margin-top: 7px;
}

.drive-info {
  flex: 1;
}

.drive-info span,
.drive-info small {
  display: block;
}

.drive-info small {
  font-size: 11px;
  color: #6d6d6d;
}

.bar {
  height: 13px;
  margin-top: 1px;
  border: 1px solid #bcbcbc;
  background: #e6e6e6;
}

.used {
  height: 11px;
  background: #26a0da;
}

.cd-name {
  padding-top: 7px;
}

.statusbar {
  display: flex;
  align-items: center;
  height: 24px;
  padding: 0 5px 0 14px;
  color: #2f3a55;
}

.view {
  display: flex;
  align-items: center;
  justify-content: center;
  width: 22px;
  height: 22px;
}

.view:first-of-type {
  margin-left: auto;
}

.back .statusbar {
  padding-right: 4px;
}

.view.on {
  border: 1px solid #4ab0d8;
  background: #c4ebf8;
}

/* Back window list */
.details {
  flex: 1;
}

.details table {
  width: 205px;
  margin-left: auto;
  border-collapse: collapse;
}

.details th {
  height: 26px;
  padding-left: 6px;
  border-right: 1px solid #e5e5e5;
  font-weight: 400;
  text-align: left;
}

.details thead::after {
  content: "";
  display: block;
  height: 5px;
}

.details th:first-child {
  width: 116px;
  padding-left: 3px;
}

.details th:last-child {
  border-right: 9px solid transparent;
}

.details td {
  height: 21px;
  padding: 0 4px 0 3px;
}

.details td:last-child {
  text-align: right;
  border-right: 12px solid #fefefe;
}

.details .selected {
  background: #d9d9d9;
}

.hscroll {
  display: flex;
  align-items: center;
  height: 15px;
  background: #f0f0f0;
  padding-right: 4px;
  color: #444;
}

.hthumb {
  flex: 1;
  height: 15px;
  margin-right: 5px;
  background: #cdcdcd;
}

.cursor {
  position: absolute;
  left: 278px;
  top: 253px;
}

/* Taskbar */
.taskbar {
  position: absolute;
  left: 0;
  right: 0;
  bottom: 0;
  display: flex;
  height: 40px;
  background: rgba(12, 12, 12, .91);
  color: #fff;
}

.taskbar button {
  display: flex;
  align-items: center;
  justify-content: center;
}

.start {
  width: 48px;
}

.task-search {
  display: flex;
  align-items: center;
  width: 288px;
  padding: 0 2px 0 12px;
  background: #f3f3f3;
  border: 1px solid #ccc;
  border-width: 1px 0;
}

.task-search input {
  flex: 1;
  min-width: 0;
  padding-left: 10px;
  font-size: 14px;
  outline: none;
}

.task-search input::placeholder {
  color: #444;
}

.apps {
  display: flex;
}

.apps button {
  width: 49px;
  border-bottom: 3px solid transparent;
}

.apps .active {
  background: #474747;
  border-color: #76b9ed;
}

.apps .running {
  border-color: #76b9ed;
}

.tray {
  display: flex;
  margin-left: auto;
  margin-right: 3px;
  padding-right: 5px;
  border-right: 1px solid #555;
}

.tray button {
  width: 24px;
}

.tray .weather {
  gap: 8px;
  width: auto;
  margin-right: 20px;
  font-size: 13px;
}

.tray .clock {
  flex-direction: column;
  width: 64px;
  line-height: 18px;
}

.tray .notices {
  position: relative;
  width: 44px;
}

.badge {
  position: absolute;
  right: 3px;
  bottom: 3px;
  width: 20px;
  height: 20px;
  border: 1px solid #888;
  border-radius: 50%;
  background: #333;
  line-height: 18px;
}
```
